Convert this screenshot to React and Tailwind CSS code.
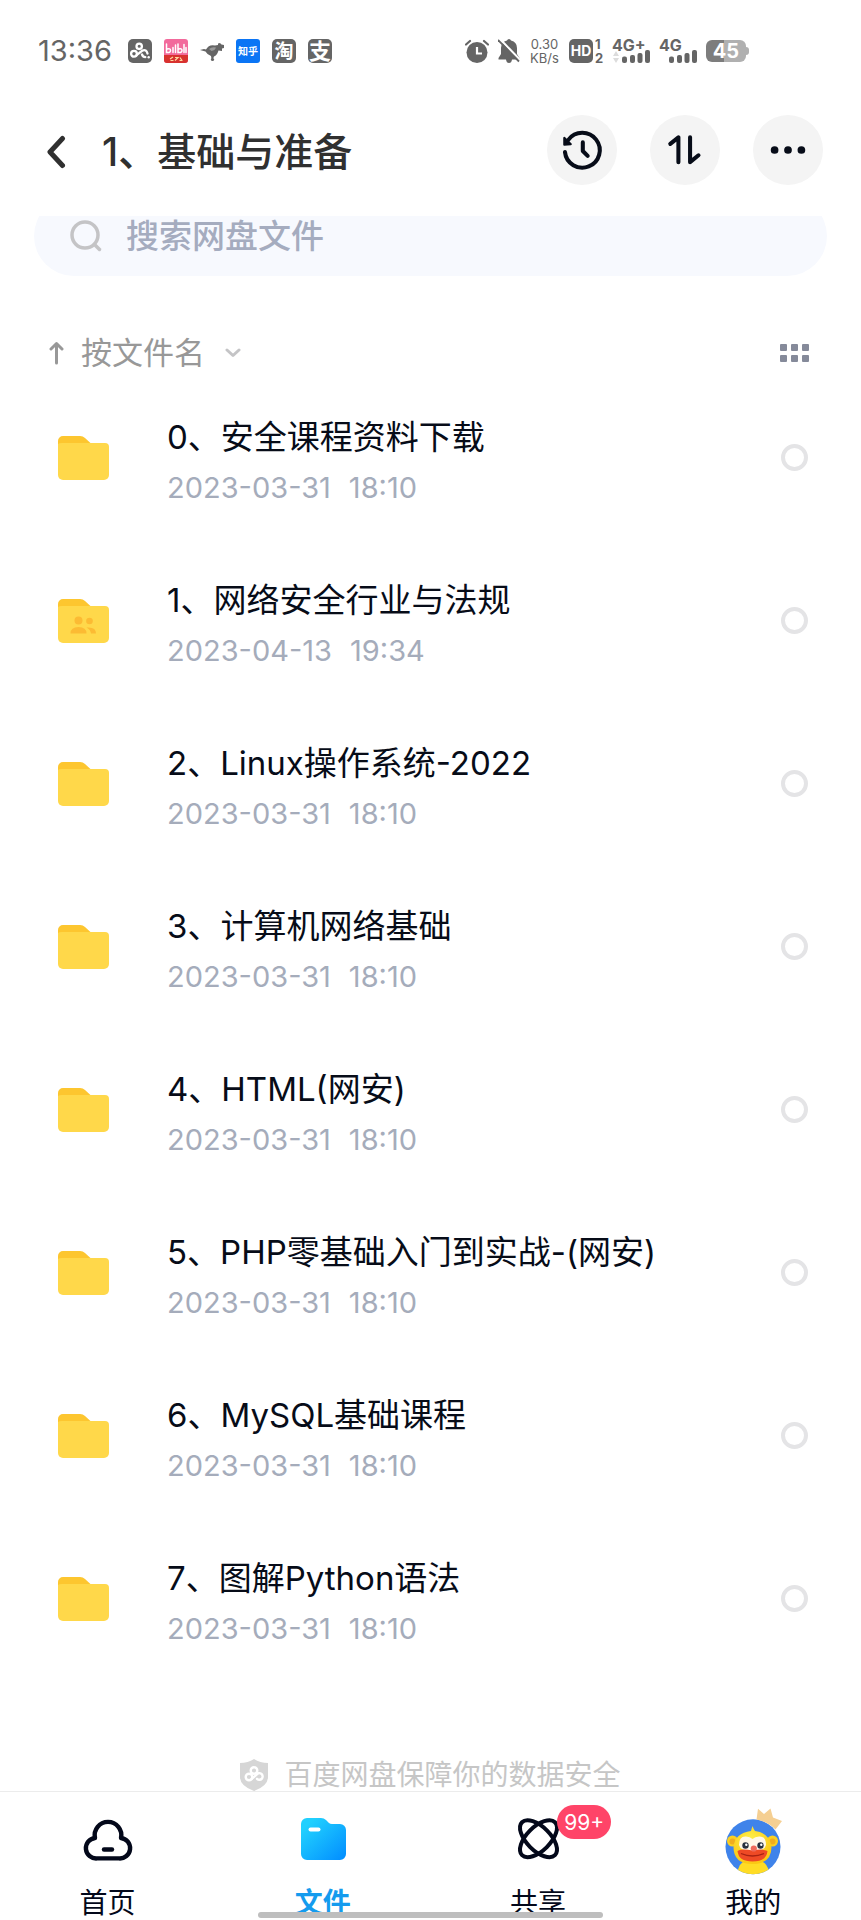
import { useState } from "react";

const files = [
  { name: "0、安全课程资料下载", date: "2023-03-31", time: "18:10" },
  { name: "1、网络安全行业与法规", date: "2023-04-13", time: "19:34", shared: true },
  { name: "2、Linux操作系统-2022", date: "2023-03-31", time: "18:10" },
  { name: "3、计算机网络基础", date: "2023-03-31", time: "18:10" },
  { name: "4、HTML(网安)", date: "2023-03-31", time: "18:10" },
  { name: "5、PHP零基础入门到实战-(网安)", date: "2023-03-31", time: "18:10" },
  { name: "6、MySQL基础课程", date: "2023-03-31", time: "18:10" },
  { name: "7、图解Python语法", date: "2023-03-31", time: "18:10" },
];

const Signal = ({ label, arrows }) => (
  <div className="relative h-6 w-[38px]">
    <span className="absolute left-0 -top-1 text-[16px] leading-5 font-bold">{label}</span>
    <svg viewBox="0 0 38 24" className="h-6 w-[38px]" fill="currentColor">
      {arrows && <path d="M1 17l3-5 3 5zM1 19l3 5 3-5z" fill="#dcdcdc" />}
      <rect x="10" y="17.500" width="5" height="6.500" rx="2" />
      <rect x="18" y="16" width="5" height="8" rx="2" />
      <rect x="25.500" y="14" width="5" height="10" rx="2" />
      <rect x="33" y="11" width="5" height="13" rx="2" />
    </svg>
  </div>
);

const StatusBar = () => (
  <div className="flex items-center justify-between pt-9 pb-4 pl-[38px] pr-28 text-[#656565]">
    <div className="flex h-[30px] items-center gap-3">
      <span className="mr-1 text-[29px] leading-[30px]">13:36</span>
      <svg viewBox="0 0 24 24" className="size-6">
        <rect width="24" height="24" rx="5" fill="#656565" />
        <g fill="none" stroke="#fff" strokeWidth="2.300" strokeLinecap="round">
          <circle cx="11.200" cy="7.300" r="2.700" />
          <circle cx="6" cy="14.800" r="2.900" />
          <path d="M8.600 16.200l5.800-4.600q4-1.500 5.100 2.900M14 15.500q1 2.500 3.300 2.600" />
        </g>
        <circle cx="20.700" cy="18.200" r="1.200" fill="#fff" />
      </svg>
      <svg viewBox="0 0 24 24" className="size-6">
        <rect width="24" height="24" rx="3" fill="#f26a9c" />
        <path d="M0 16h24v5a3 3 0 0 1-3 3H3a3 3 0 0 1-3-3z" fill="#d8322f" />
        <g fill="none" stroke="#fff" strokeWidth="1.500" strokeLinecap="round">
          <path d="M2.500 5v8.500q4 .5 4-2t-3.500-1.500M9 8.500v5M11.500 6v7.500M14 5v8.500q4 .5 4-2t-3.500-1.500M20 5.500v8M22 8.500v5" />
        </g>
        <path d="M6 20l3-2M6.500 21.500h3M11 18.500h3l-3 3M16 18.500l2 3M15.500 21.500h3" stroke="#ffd9a0" strokeWidth="1.200" fill="none" />
      </svg>
      <svg viewBox="0 0 24 24" className="size-6" fill="#656565">
        <path d="M0 11l4-1 2 .5Q9 5 15 6.500l3-.5V4.500L20 4l1.500 1.500L24 6v3l-2 .5V12l-3.500-.5q-1.500 5-4.500 6l-1 2.500h-1.500l-.5-3Q7 15.500 5.500 12.500z" />
        <path d="M9 10q3-2.500 7-1.500-1 3-4.500 3.500z" fill="#999" />
        <circle cx="12.500" cy="20.500" r="1.600" />
      </svg>
      <span className="flex size-6 items-center justify-center rounded-[3px] bg-[#0b75f5] text-[10px] leading-none font-bold text-white">
        知乎
      </span>
      <span className="flex size-6 items-center justify-center rounded-[5px] bg-[#656565] text-[19px] leading-none font-bold text-white">
        淘
      </span>
      <span className="flex size-6 items-center justify-center rounded-[5px] bg-[#656565] text-[22px] leading-none font-bold text-white">
        支
      </span>
    </div>

    <div className="flex h-[30px] items-center gap-[9px]">
      <svg viewBox="0 0 24 24" className="size-6">
        <circle cx="12" cy="13.500" r="10.500" fill="currentColor" />
        <path d="M1 5.500L5 2M23 5.500L19 2" stroke="currentColor" strokeWidth="2.200" strokeLinecap="round" />
        <path d="M12 8v6.500h5" stroke="#fff" strokeWidth="2.200" fill="none" />
      </svg>
      <svg viewBox="0 0 22 24" className="h-6 w-[22px]">
        <path d="M11 0q1.500 0 2 1.500Q19 3 19 9v6l2.500 4v1.500H14Q13.500 24 11 24t-3-3.500H.5V19L3 15V9Q3 3 9 1.500 9.500 0 11 0z" fill="currentColor" />
        <path d="M2 0l21 22" stroke="#fff" strokeWidth="2.200" />
        <path d="M0 1l21 21.500" stroke="currentColor" strokeWidth="1.800" />
      </svg>
      <div className="flex w-[31px] flex-col items-center text-[13px] leading-[14px]">
        <span>0.30</span>
        <span>KB/s</span>
      </div>
      <div className="flex items-center gap-[2px]">
        <span className="flex size-6 items-center justify-center rounded-[5px] bg-[#656565] text-[14px] leading-none font-bold text-white">
          HD
        </span>
        <span className="flex w-2 flex-col text-[13px] leading-[14px] font-bold">
          <span>1</span>
          <span>2</span>
        </span>
      </div>
      <Signal label="4G+" arrows />
      <Signal label="4G" />
      <div className="flex items-center">
        <span className="flex h-[22px] w-10 items-center justify-center rounded-md bg-linear-to-r from-[#7d7d7d] from-45% to-[#b0b0b0] to-45% text-[20px] leading-none font-bold text-white">
          45
        </span>
        <span className="h-2 w-[3px] rounded-r bg-[#b0b0b0]" />
      </div>
    </div>
  </div>
);

const RoundButton = ({ label, children }) => (
  <button type="button" aria-label={label} className="size-[70px] rounded-full bg-[#f4f4f4] text-[#070c18]">
    <svg
      viewBox="0 0 69 69"
      className="size-full"
      fill="none"
      stroke="currentColor"
      strokeWidth="4"
      strokeLinecap="round"
      strokeLinejoin="round"
    >
      {children}
    </svg>
  </button>
);

const Header = () => (
  <header className="flex items-center justify-between pt-[33px] pr-[38px] pb-[31px] pl-[46px]">
    <div className="flex items-center pt-1 text-[#303030]">
      <button type="button" aria-label="返回">
        <svg viewBox="0 0 20 34" className="h-[34px] w-5" fill="none" stroke="currentColor" strokeWidth="5" strokeLinecap="round" strokeLinejoin="round">
          <path d="M16.500 3.500L4 17l12.500 13.500" />
        </svg>
      </button>
      <h1 className="pl-9 text-[39px] leading-[48px] font-medium">1、基础与准备</h1>
    </div>
    <div className="flex gap-[33px]">
      <RoundButton label="历史记录">
        <path d="M17.700 36.500A17.200 17.200 0 1 0 21 24.500" />
        <path d="M17 22.500v6.800l6.500-.6z" fill="currentColor" strokeWidth="2" />
        <path d="M35.300 27v8.500l4.800 4.800" />
      </RoundButton>
      <RoundButton label="传输列表">
        <path d="M20 28.500l8-6.500v24.500M39.500 22v24.500l8.300-6.800" />
      </RoundButton>
      <RoundButton label="更多">
        <g fill="currentColor" stroke="none">
          <circle cx="21.300" cy="34.500" r="3.800" />
          <circle cx="34.500" cy="34.500" r="3.800" />
          <circle cx="47.700" cy="34.500" r="3.800" />
        </g>
      </RoundButton>
    </div>
  </header>
);

const FolderIcon = ({ shared }) => (
  <svg viewBox="0 0 51 44" className="h-11 w-[51px] shrink-0">
    <path d="M0 5a5 5 0 0 1 5-5h17q3 0 5 2l6 5.500L28 20H0z" fill="#fdc62f" />
    <path d="M0 8q1-1 4-1h43a4 4 0 0 1 4 4v28a5 5 0 0 1-5 5H5a5 5 0 0 1-5-5z" fill="#ffd84a" />
    {shared && (
      <g fill="#fcbb33">
        <circle cx="20.500" cy="21.500" r="4" />
        <circle cx="31.500" cy="22" r="3.300" />
        <path d="M12.500 34.500q0-6.500 8-6.500t8 6.500zM28.500 28.500q9.500-1 9.500 6h-5q-.5-4-4.500-6z" />
      </g>
    )}
  </svg>
);

const FileRow = ({ file, checked, onToggle }) => (
  <li className="flex h-[163px] items-center pr-[53px] pl-[58px]">
    <FolderIcon shared={file.shared} />
    <a href="#" className="min-w-0 flex-1 pt-1 pl-[58px]">
      <span className="block text-[33px] leading-[46px] text-[#070c18]">{file.name}</span>
      <span className="mt-[10px] flex gap-[18px] text-[29px] leading-9 text-[#a5acbb]">
        <span>{file.date}</span>
        <span>{file.time}</span>
      </span>
    </a>
    <input
      type="checkbox"
      aria-label={file.name}
      checked={checked}
      onChange={onToggle}
      className="size-[27px] appearance-none rounded-full border-4 border-[#e4e4e6] checked:border-[#1aa3f0]"
    />
  </li>
);

const NavItem = ({ label, active, badge, children }) => (
  <a href="#" className={`flex flex-1 flex-col items-center gap-[11px] ${active ? "font-bold text-[#149bee]" : "text-[#03081a]"}`}>
    <span className="relative">
      <svg viewBox="0 0 68 68" className="size-[68px]" fill="none">
        {children}
      </svg>
      {badge && (
        <span className="absolute -top-[3px] left-[53px] flex h-[34px] w-[54px] items-center justify-center rounded-full bg-[#ff4468] text-[21px] leading-none text-white">
          {badge}
        </span>
      )}
    </span>
    <span className="text-[28px] leading-8">{label}</span>
  </a>
);

const BottomNav = () => (
  <nav className="relative flex border-t border-[#ececec] bg-white pt-4 pb-px">
    <NavItem label="首页">
      <path
        d="M23 50.400A10.250 10.250 0 0 1 21 30A13.300 13.300 0 1 1 47 30A10.250 10.250 0 0 1 45 50.400Z"
        stroke="currentColor"
        strokeWidth="4.400"
        strokeLinejoin="round"
      />
      <path d="M30 41.500h8" stroke="currentColor" strokeWidth="4.400" strokeLinecap="round" />
    </NavItem>
    <NavItem label="文件" active>
      <defs>
        <linearGradient id="folderBlue" x1="0" y1="0" x2="1" y2="1">
          <stop offset="0.150" stopColor="#21d0fe" />
          <stop offset="1" stopColor="#018cff" />
        </linearGradient>
      </defs>
      <path
        d="M12 16a6 6 0 0 1 6-6h14q3 0 5 2l3 3q1 1 3 1h8a6 6 0 0 1 6 6v24a6 6 0 0 1-6 6H18a6 6 0 0 1-6-6z"
        fill="url(#folderBlue)"
      />
      <path d="M21.500 21.500h8" stroke="#fff" strokeWidth="4" strokeLinecap="round" />
    </NavItem>
    <NavItem label="共享" badge="99+">
      <g stroke="currentColor" strokeWidth="4">
        <ellipse cx="34.500" cy="30.700" rx="23.300" ry="11.800" transform="rotate(45 34.500 30.700)" />
        <ellipse cx="34.500" cy="30.700" rx="23.300" ry="11.800" transform="rotate(-45 34.500 30.700)" />
      </g>
    </NavItem>
    <NavItem label="我的">
      <defs>
        <clipPath id="avatarClip">
          <circle cx="34" cy="38.800" r="27.500" />
        </clipPath>
        <radialGradient id="face" cx="0.450" cy="0.350" r="0.650">
          <stop offset="0" stopColor="#fff04a" />
          <stop offset="1" stopColor="#fbc713" />
        </radialGradient>
      </defs>
      <circle cx="34" cy="38.800" r="27.500" fill="#3f83ea" />
      <path d="M37.500 11.500L39 .8l6 5.200 6.500-5.500 2.500 9 9 3.500-6.500 8.500Q49 14 37.500 11.500z" fill="#f5cf92" />
      <g clipPath="url(#avatarClip)">
        <path d="M18 68q1-14 9-15h14q8 1 10 15z" fill="#ffdc25" />
        <circle cx="13.500" cy="33" r="5.500" fill="#fbd021" />
        <circle cx="53.500" cy="33" r="5.500" fill="#fbd021" />
        <circle cx="13.500" cy="33.500" r="3" fill="#f2ad1d" />
        <circle cx="53.500" cy="33.500" r="3" fill="#f2ad1d" />
        <path d="M32 23q.5-2 1.500-5 1 3 2.500 5 15 2 16.500 16 0 17-19 17T14.500 39Q16 25 32 23z" fill="url(#face)" />
        <path d="M20 37q0-9 7-8.500 4 0 6.500 2.500 2.500-2.500 6.500-2.500 7-.5 7 8.500-1 6-13.500 6T20 37z" fill="#fff8e8" />
        <path d="M18.500 43q4-2.500 15-.5 11-2 15 .5-1 10.500-15 10.500T18.500 43z" fill="#ee4a25" />
        <path d="M22 45.500q11.500 5 23 0" stroke="#a82312" strokeWidth="1.300" />
      </g>
      <circle cx="26.500" cy="37.500" r="3.200" fill="#28313f" />
      <circle cx="41.500" cy="37.500" r="3.200" fill="#28313f" />
      <circle cx="27.300" cy="36.700" r="1.200" fill="#fff" />
      <circle cx="42.300" cy="36.700" r="1.200" fill="#fff" />
      <circle cx="34.800" cy="40.500" r="3.100" fill="#ee6a5b" />
    </NavItem>
    <div className="absolute bottom-[2px] left-[30%] h-[6px] w-2/5 rounded-full bg-[#bebebe]" />
  </nav>
);

const App = () => {
  const [checked, setChecked] = useState([]);

  const toggle = (name) => {
    setChecked(checked.includes(name) ? checked.filter((n) => n !== name) : [...checked, name]);
  };

  return (
    <div className="flex min-h-screen flex-col bg-white font-['Inter','Noto_Sans_CJK_SC',sans-serif]">
      <StatusBar />
      <Header />

      <main className="flex flex-1 flex-col overflow-hidden">
        {/* Search, partly scrolled under the header */}
        <label className="mx-[34px] -mt-5 flex h-20 shrink-0 items-center rounded-full bg-[#f7f9fe] pl-9">
          <svg viewBox="0 0 32 32" className="size-8 shrink-0" fill="none" stroke="#c4c4c6" strokeWidth="3.500" strokeLinecap="round">
            <circle cx="15" cy="15" r="13" />
            <path d="M24.500 24.500l5 5" />
          </svg>
          <input
            type="search"
            aria-label="搜索网盘文件"
            placeholder="搜索网盘文件"
            className="ml-6 min-w-0 flex-1 bg-transparent text-[33px] leading-[46px] font-medium outline-none placeholder:text-[#a5acbf]"
          />
        </label>

        {/* Sort bar */}
        <div className="mt-[58px] flex h-[38px] items-center justify-between pr-[52px] pl-[49px]">
          <button type="button" className="flex items-center text-[31px] leading-[38px] text-[#989898]">
            <svg viewBox="0 0 15 24" className="h-6 w-[15px]" fill="none" stroke="currentColor" strokeWidth="3" strokeLinecap="round" strokeLinejoin="round">
              <path d="M7.500 22V2.500M2 8l5.500-5.500L13 8" />
            </svg>
            <span className="pl-[17px]">按文件名</span>
            <svg viewBox="0 0 16 10" className="ml-5 h-[10px] w-4" fill="none" stroke="#c4c4c6" strokeWidth="3" strokeLinecap="round" strokeLinejoin="round">
              <path d="M2 2l6 5.500L14 2" />
            </svg>
          </button>
          <button type="button" aria-label="切换视图" className="grid grid-cols-3 gap-1">
            {[0, 1, 2, 3, 4, 5].map((i) => (
              <span key={i} className="size-[7px] rounded-[1px] bg-[#858a9a]" />
            ))}
          </button>
        </div>

        <ul className="mt-1">
          {files.map((file) => (
            <FileRow
              key={file.name}
              file={file}
              checked={checked.includes(file.name)}
              onToggle={() => toggle(file.name)}
            />
          ))}
        </ul>

        <p className="mt-auto flex items-center justify-center gap-4 text-[28px] leading-8 text-[#c6c6c6]">
          <svg viewBox="0 0 28 32" className="h-8 w-7">
            <path d="M14 0q6 4 14 4v14q0 9-14 14Q0 27 0 18V4q8 0 14-4z" fill="#d6d6d6" />
            <g fill="none" stroke="#fff" strokeWidth="2.400" strokeLinecap="round">
              <circle cx="14" cy="11.500" r="3.300" />
              <circle cx="9" cy="18" r="3.300" />
              <path d="M11.500 20l5-4.200a3.300 3.300 0 1 1 .5 4" />
            </g>
          </svg>
          百度网盘保障你的数据安全
        </p>
      </main>

      <BottomNav />
    </div>
  );
};

export default App;
